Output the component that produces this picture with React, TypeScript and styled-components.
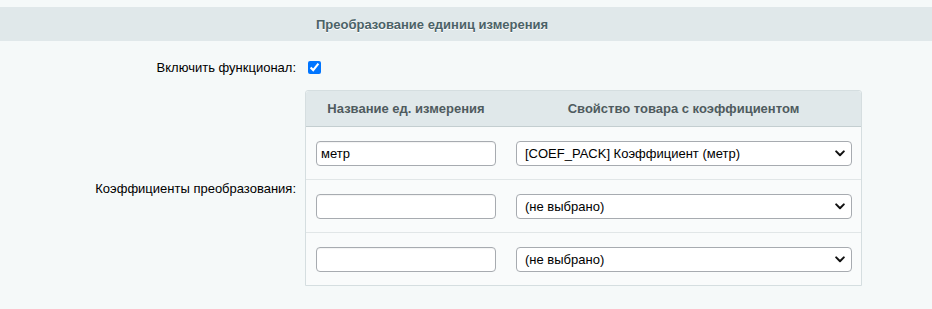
import React from 'react'
import styled, { createGlobalStyle } from 'styled-components'

const GlobalStyle = createGlobalStyle`
  html, body {
    margin: 0;
    padding: 0;
    background: #f5f9f9;
  }
  body {
    font-family: "Liberation Sans", Arial, sans-serif;
    font-size: 13px;
    color: #000;
  }
`

const units = [
  { name: 'метр', prop: '[COEF_PACK] Коэффициент (метр)' },
  { name: '', prop: '(не выбрано)' },
  { name: '', prop: '(не выбрано)' },
]

const App = () => {
  return (
    <Page>
      <GlobalStyle />
      <SectionTitle>
        <span>Преобразование единиц измерения</span>
      </SectionTitle>
      <Form>
        <FieldRow>
          <Label>Включить функционал:</Label>
          <Value>
            <Checkbox type="checkbox" defaultChecked />
          </Value>
        </FieldRow>
        <FieldRow>
          <Label>Коэффициенты преобразования:</Label>
          <Value>
            <Grid>
              <HeadRow>
                <HeadCell>Название ед. измерения</HeadCell>
                <HeadCell>Свойство товара с коэффициентом</HeadCell>
              </HeadRow>
              {units.map((u, i) => (
                <BodyRow key={i} $last={i === units.length - 1}>
                  <Cell>
                    <TextInput type="text" defaultValue={u.name} />
                  </Cell>
                  <Cell>
                    <SelectWrap>
                      <Select defaultValue={u.prop}>
                        <option>(не выбрано)</option>
                        <option>[COEF_PACK] Коэффициент (метр)</option>
                      </Select>
                      <Chevron viewBox="0 0 10 7">
                        <path d="M1.2 1.4 L5 5.2 L8.8 1.4" fill="none" stroke="#111" strokeWidth="2" strokeLinecap="round" strokeLinejoin="round" />
                      </Chevron>
                    </SelectWrap>
                  </Cell>
                </BodyRow>
              ))}
            </Grid>
          </Value>
        </FieldRow>
      </Form>
    </Page>
  )
}

export default App

const Page = styled.div`
  width: 932px;
  min-height: 309px;
  padding-top: 7px;
  box-sizing: border-box;
`

const SectionTitle = styled.div`
  height: 34px;
  background: #e0e8ea;
  display: flex;
  align-items: center;
  padding-left: 316px;
  font-weight: bold;
  font-size: 13px;
  color: #4b6267;
  text-shadow: 0 1px #fff;
`

const Form = styled.div`
  display: flex;
  flex-direction: column;
  padding-top: 14px;
  gap: 11px;
`

const FieldRow = styled.div`
  display: grid;
  grid-template-columns: 304px 1fr;
  align-items: center;
  min-height: 24px;
`

const Label = styled.div`
  text-align: right;
  padding-right: 8px;
  color: #000;
`

const Value = styled.div`
  display: flex;
  align-items: center;
`

const Checkbox = styled.input`
  width: 13px;
  height: 13px;
  margin: 0 0 0 4px;
  accent-color: #0075ff;
`

const Grid = styled.div`
  width: 555px;
  margin-left: 1px;
  border: 1px solid #d5dee0;
  border-radius: 3px 3px 0 0;
  background: #f9fbfb;
`

const HeadRow = styled.div`
  display: grid;
  grid-template-columns: 200px 1fr;
  height: 35px;
  background: #e0e8ea;
  border-bottom: 1px solid #c4ced0;
  border-radius: 3px 3px 0 0;
`

const HeadCell = styled.div`
  display: flex;
  align-items: center;
  justify-content: center;
  font-weight: bold;
  color: #4f5b5e;
`

const BodyRow = styled.div<{ $last?: boolean }>`
  display: grid;
  grid-template-columns: 200px 1fr;
  height: 52px;
  border-bottom: ${p => (p.$last ? 'none' : '1px solid #e1e6e7')};
`

const Cell = styled.div`
  display: flex;
  align-items: center;
  padding: 0 10px;
`

const TextInput = styled.input`
  width: 180px;
  height: 25px;
  box-sizing: border-box;
  border: 1px solid #a7abb0;
  border-radius: 4px;
  background: #fff;
  padding: 0 4px;
  font-family: "Liberation Sans", Arial, sans-serif;
  font-size: 13px;
  color: #000;
  box-shadow: inset 0 1px 1px rgba(0, 0, 0, 0.05);
  outline: none;
`

const SelectWrap = styled.div`
  position: relative;
  width: 336px;
  height: 25px;
`

const Select = styled.select`
  appearance: none;
  width: 100%;
  height: 100%;
  box-sizing: border-box;
  border: 1px solid #a7abb0;
  border-radius: 4px;
  background: #fff;
  padding: 0 24px 0 8px;
  font-family: "Liberation Sans", Arial, sans-serif;
  font-size: 13px;
  color: #000;
  outline: none;
`

const Chevron = styled.svg`
  position: absolute;
  right: 7px;
  top: 9px;
  width: 10px;
  height: 7px;
  pointer-events: none;
`
